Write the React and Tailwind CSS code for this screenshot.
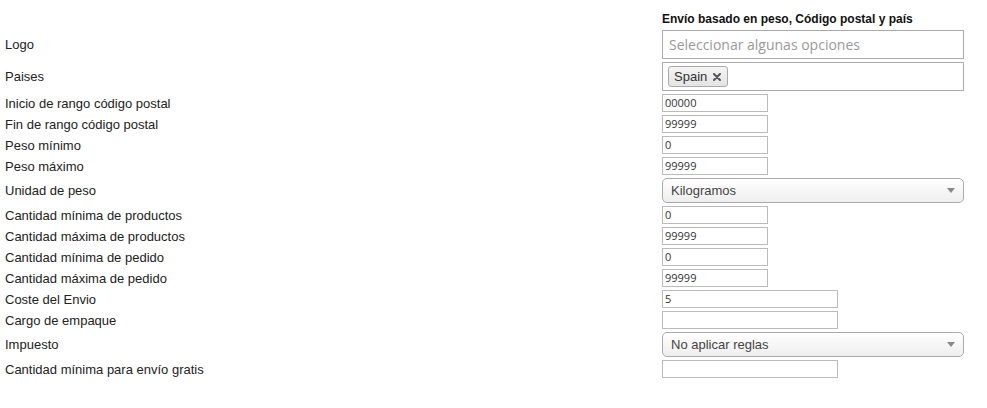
import React from "react";

const rows = [
  { label: "Inicio de rango código postal", type: "input", value: "00000" },
  { label: "Fin de rango código postal", type: "input", value: "99999" },
  { label: "Peso mínimo", type: "input", value: "0" },
  { label: "Peso máximo", type: "input", value: "99999" },
  { label: "Unidad de peso", type: "select", value: "Kilogramos" },
  { label: "Cantidad mínima de productos", type: "input", value: "0" },
  { label: "Cantidad máxima de productos", type: "input", value: "99999" },
  { label: "Cantidad mínima de pedido", type: "input", value: "0" },
  { label: "Cantidad máxima de pedido", type: "input", value: "99999" },
  { label: "Coste del Envio", type: "wide", value: "5" },
  { label: "Cargo de empaque", type: "wide", value: "" },
  { label: "Impuesto", type: "select", value: "No aplicar reglas" },
  { label: "Cantidad mínima para envío gratis", type: "wide", value: "" },
];

function Field({ row }) {
  if (row.type === "select") {
    return (
      <div className="w-[302px] h-[25px] flex items-center justify-between border border-[#aaa] rounded-[5px] bg-gradient-to-b from-white to-[#eee] pl-[8px] pr-[8px] text-[13px] leading-[15px] text-[#444]">
        <span>{row.value}</span>
        <span className="w-0 h-0 border-l-[4px] border-r-[4px] border-t-[5px] border-l-transparent border-r-transparent border-t-[#888]"></span>
      </div>
    );
  }
  return (
    <div
      className={`${row.type === "wide" ? "w-[176px]" : "w-[106px]"} h-[18px] border border-[#bbb] bg-white flex items-center pl-[2px] text-[11px] leading-[14px] text-[#333] font-['Open_Sans',sans-serif]`}
    >
      {row.value}
    </div>
  );
}

export default function App() {
  return (
    <div className="w-[987px] h-[408px] bg-white text-[13px] leading-[15px] text-[#222] font-['Liberation_Sans',Arial,sans-serif]">
      <div className="grid grid-cols-[662px_1fr] gap-y-[3px] pt-[12px]">
        <div></div>
        <div className="h-[15px] font-bold text-[12px] leading-[15px] text-[#111]">
          Envío basado en peso, Código postal y país
        </div>

        <div className="pl-[5px] flex items-center">Logo</div>
        <div className="w-[302px] h-[29px] border border-[#aaa] bg-white flex items-center pl-[6px] text-[14px] leading-[18px] text-[#999] font-['Open_Sans',sans-serif]">
          Seleccionar algunas opciones
        </div>

        <div className="pl-[5px] flex items-center">Paises</div>
        <div className="w-[302px] h-[29px] border border-[#aaa] bg-white flex items-center pl-[5px]">
          <span className="h-[21px] flex items-center gap-[6px] border border-[#aaa] rounded-[3px] bg-gradient-to-b from-[#f4f4f4] to-[#e4e4e4] pl-[5px] pr-[6px] text-[13px] text-[#333]">
            Spain
            <svg width="8" height="8" viewBox="0 0 8 8" className="mt-[1px]">
              <path d="M1 1 L7 7 M7 1 L1 7" stroke="#555" strokeWidth="2" strokeLinecap="round" />
            </svg>
          </span>
        </div>

        {rows.map((row) => (
          <React.Fragment key={row.label}>
            <div className="pl-[5px] flex items-center">{row.label}</div>
            <div>
              <Field row={row} />
            </div>
          </React.Fragment>
        ))}
      </div>
    </div>
  );
}
